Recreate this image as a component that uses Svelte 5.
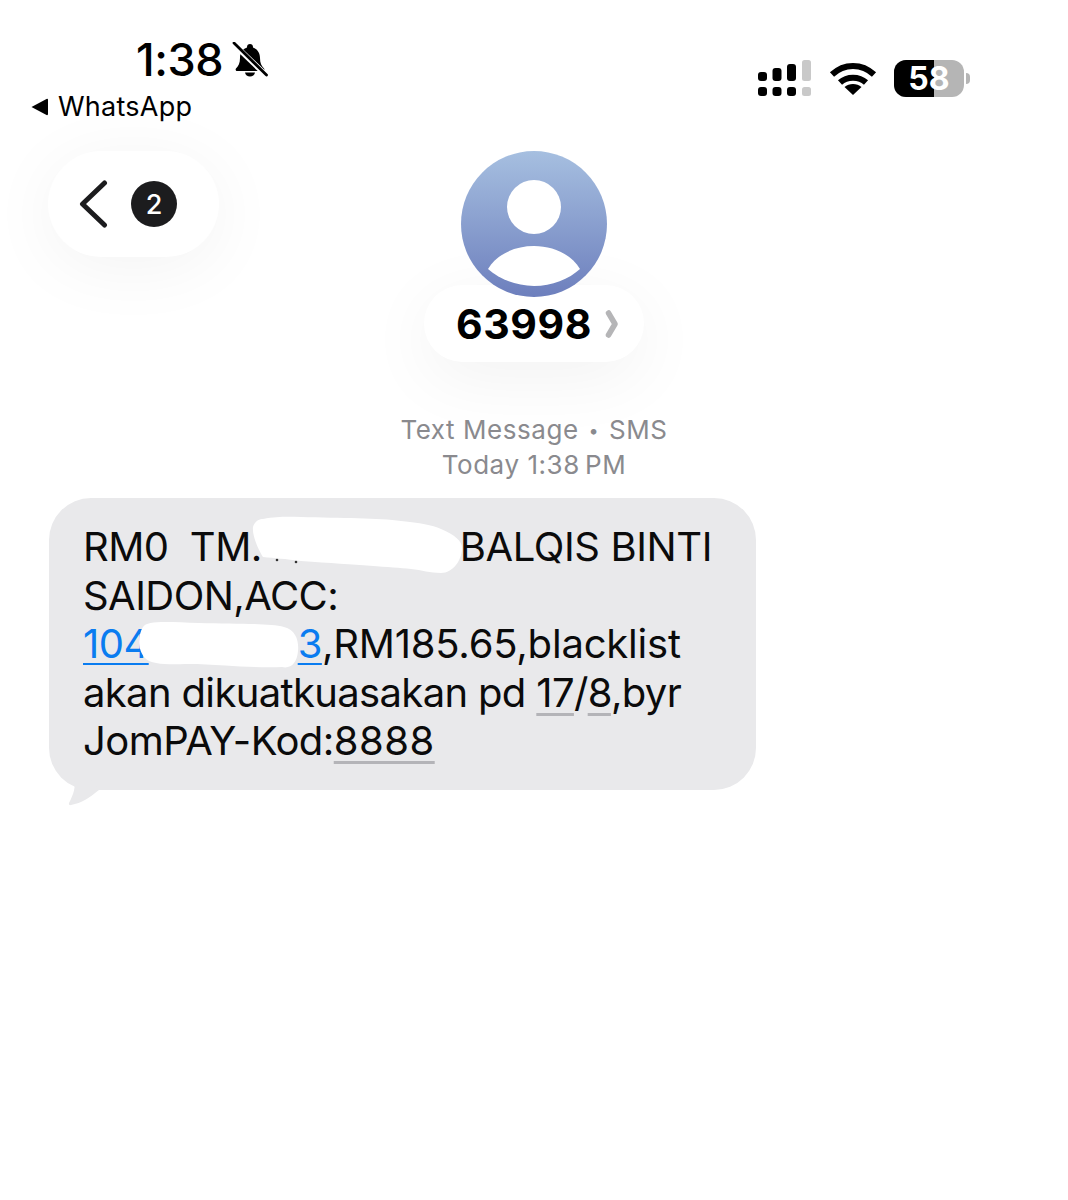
<script>
	const sans = 'Inter';
</script>

<div class="page" style="--sans: {sans}">
	<header class="status">
		<div class="status-left">
			<div class="clock">
				<span class="time">1:38</span>
				<svg class="bell" viewBox="0 0 36 36" width="36" height="36">
					<path d="M18 2c-1.800 0-3 1.200-3 3v.6C10.500 7 8 11 8 16c0 5-1.500 8-4 10.500-.8.8-.3 2.500 1 2.500h26c1.300 0 1.800-1.700 1-2.500C29.500 24 28 21 28 16c0-5-2.500-9-7-10.400V5c0-1.800-1.200-3-3-3z" fill="#000" />
					<path d="M13 30.500h10c-.4 2.500-2.500 4-5 4s-4.600-1.500-5-4z" fill="#000" />
					<path d="M1 1.500L35 34" stroke="#fff" stroke-width="5.500" />
					<path d="M2 1L34.500 33" stroke="#000" stroke-width="2.800" stroke-linecap="round" />
				</svg>
			</div>
			<div class="back-app">
				<svg viewBox="0 0 18 18" width="18" height="18"><path d="M0.500 9L15.500 1q1.500-.6 1.500 1v14q0 1.600-1.500 1z" fill="#000" /></svg>
				<span>WhatsApp</span>
			</div>
		</div>
		<div class="status-right">
			<svg viewBox="0 0 53 36" width="53" height="36">
				<rect x="0" y="12" width="9" height="9" rx="3" fill="#000" />
				<rect x="14.500" y="8" width="9" height="13" rx="3" fill="#000" />
				<rect x="29" y="4" width="9" height="17" rx="3" fill="#000" />
				<rect x="44" y="0" width="9" height="21" rx="2.500" fill="#c9c9c9" />
				<rect x="0" y="27" width="9" height="9" rx="3" fill="#000" />
				<rect x="14.500" y="27" width="9" height="9" rx="3" fill="#000" />
				<rect x="29" y="27" width="9" height="9" rx="3" fill="#000" />
				<rect x="44" y="27" width="9" height="9" rx="2.500" fill="#c9c9c9" />
			</svg>
			<svg class="wifi" viewBox="0 0 48 34" width="48" height="34">
				<path d="M3 13.500C15 2 33 2 45 13.500" fill="none" stroke="#000" stroke-width="6" stroke-linecap="butt" />
				<path d="M11 21.500C18 15 30 15 37 21.500" fill="none" stroke="#000" stroke-width="6" />
				<path d="M24 34L15.500 26C20 22 28 22 32.500 26z" fill="#000" />
			</svg>
			<div class="battery">
				<div class="battery-body">
					<div class="battery-fill"></div>
					<span class="battery-num">58</span>
				</div>
				<div class="battery-cap"></div>
			</div>
		</div>
	</header>

	<section class="nav">
		<button class="back" aria-label="Back, 2 unread">
			<svg viewBox="0 0 30 48" width="30" height="48">
				<path d="M25.500 3L3.500 24l22 21" fill="none" stroke="#1c1c1e" stroke-width="5" stroke-linecap="round" stroke-linejoin="round" />
			</svg>
			<span class="badge">2</span>
		</button>
		<div class="contact">
			<svg class="avatar" viewBox="0 0 146 146" width="146" height="146">
				<defs>
					<linearGradient id="avatar-bg" x1="0" y1="0" x2="0" y2="1">
						<stop offset="0" stop-color="#a6bfe0" />
						<stop offset="1" stop-color="#6d7fbd" />
					</linearGradient>
				</defs>
				<circle cx="73" cy="73" r="73" fill="url(#avatar-bg)" />
				<circle cx="73" cy="56" r="27" fill="#fff" />
				<path d="M27 118C36 103 54 95 73 95s37 8 46 23c-11 10-28 17-46 17s-35-7-46-17z" fill="#fff" />
			</svg>
			<div class="name-pill">
				<span class="name">63998</span>
				<svg viewBox="0 0 14 28" width="14" height="28">
					<path d="M3.500 3L10 14 3.500 25" fill="none" stroke="#b5b5b7" stroke-width="5.500" stroke-linecap="round" stroke-linejoin="round" />
				</svg>
			</div>
		</div>
		<div></div>
	</section>

	<div class="meta">
		<div>Text Message <span class="dot">•</span> SMS</div>
		<div>Today 1:38&#8239;PM</div>
	</div>

	<div class="thread">
		<div class="bubble">
			<p>
				RM0&nbsp; TM.<span class="redact r1">
					<svg viewBox="0 0 214 60" width="214" height="60">
						<path d="M3 12C5 6 9 4 13 4 30 1 40 2 51 2c39 1 79 1 100 4 19 2 31 4 40 8 14 6 21 12 21 19 0 12-9 25-21 25-11 0-19-3-30-4-21-2-51-4-110-8-16-2-26-3-38-4C8 34 2 20 3 12z" fill="#fff" />
						<circle cx="27" cy="45" r="1.300" fill="#333" />
						<circle cx="46" cy="47" r="1.300" fill="#333" />
					</svg>
				</span><span class="name-end">BALQIS BINTI</span><br />
				SAIDON,ACC:<br />
				<span class="link">104<span class="redact r2">
					<svg viewBox="0 0 160 48" width="160" height="48">
						<path d="M4 6C8 -1 30 1 60 2c35 1 70 0 85 4 12 3 15 14 14 24-1 12-7 18-16 16-30 1-60-2-85-3-24 0-45 2-52-6C-2 28 -1 14 4 6z" fill="#fff" />
					</svg>
				</span>3</span><span class="amount">,RM185.65,blacklist</span><br />
				<span class="tight">akan dikuatkuasakan pd <span class="data">17</span>/<span class="data">8</span>,byr</span><br />
				JomPAY-Kod:<span class="data digits">8888</span>
			</p>
			<svg class="tail" viewBox="0 0 40 30" width="40" height="30">
				<path d="M8 0C12 8 8 17 4 25c-.5 1.500.5 2.500 2 2C17 25 24 20 34 12L24 0z" fill="#e9e9eb" />
			</svg>
		</div>
	</div>
</div>

<style>
	:global(body) {
		background: #fff;
	}

	.page {
		width: 1068px;
		min-height: 1200px;
		background: #fff;
		color: #000;
		font-family: var(--sans), "Liberation Sans", sans-serif;
		overflow: hidden;
	}

	.status {
		display: flex;
		justify-content: space-between;
		padding: 35px 98px 0 31px;
		height: 115px;
		box-sizing: border-box;
	}

	.status-left {
		display: flex;
		flex-direction: column;
		align-items: flex-start;
	}

	.clock {
		display: flex;
		align-items: center;
		gap: 9px;
		margin-left: 105px;
		height: 50px;
	}

	.time {
		font-size: 45px;
		font-weight: 550;
		letter-spacing: -0.4px;
		line-height: 50px;
	}

	.back-app {
		display: flex;
		align-items: center;
		gap: 9px;
		height: 40px;
		margin-top: 5px;
		font-size: 27px;
		letter-spacing: 0.25px;
	}

	.status-right {
		display: flex;
		align-items: center;
		gap: 18px;
		height: 86px;
	}

	.wifi {
		margin-right: -1px;
	}

	.battery {
		display: flex;
		align-items: center;
		gap: 2px;
	}

	.battery-body {
		position: relative;
		width: 70px;
		height: 37px;
		border-radius: 12px;
		background: #b5b5b5;
		overflow: hidden;
	}

	.battery-fill {
		width: 57%;
		height: 100%;
		background: #000;
	}

	.battery-num {
		position: absolute;
		inset: 0;
		display: flex;
		align-items: center;
		justify-content: center;
		font-size: 32px;
		font-weight: 700;
		color: #fff;
	}

	.battery-cap {
		width: 4px;
		height: 11px;
		border-radius: 0 6px 6px 0;
		background: #b5b5b5;
	}

	.nav {
		display: grid;
		grid-template-columns: 1fr auto 1fr;
		align-items: start;
		margin-top: 36px;
	}

	.back {
		justify-self: start;
		display: flex;
		align-items: center;
		gap: 22px;
		width: 171px;
		height: 106px;
		margin-left: 48px;
		padding: 0 0 0 31px;
		box-sizing: border-box;
		border: 0;
		border-radius: 53px;
		background: #fff;
		box-shadow: 0 10px 70px rgba(0, 0, 0, 0.05);
	}

	.badge {
		display: flex;
		align-items: center;
		justify-content: center;
		width: 46px;
		height: 46px;
		border-radius: 50%;
		background: #1c1c1e;
		color: #fff;
		font-family: var(--sans), sans-serif;
		font-size: 27px;
		font-weight: 500;
	}

	.contact {
		display: flex;
		flex-direction: column;
		align-items: center;
	}

	.avatar {
		display: block;
		position: relative;
		z-index: 1;
	}

	.name-pill {
		display: flex;
		align-items: center;
		justify-content: center;
		gap: 13px;
		width: 220px;
		height: 77px;
		padding-left: 7px;
		box-sizing: border-box;
		margin-top: -12px;
		border-radius: 39px;
		background: #fff;
		box-shadow: 0 16px 70px rgba(0, 0, 0, 0.055);
	}

	.name {
		font-size: 41px;
		font-weight: 700;
		letter-spacing: 0.6px;
	}

	.meta {
		margin-top: 51px;
		text-align: center;
		font-size: 26px;
		line-height: 34px;
		letter-spacing: 0.55px;
		color: #8a8a8e;
	}

	.dot {
		font-size: 18px;
		vertical-align: 2px;
		margin: 0 2px;
	}

	.thread {
		margin-top: 16px;
		padding-left: 49px;
	}

	.bubble {
		position: relative;
		width: 707px;
		height: 292px;
		padding: 25px 0 0 34px;
		box-sizing: border-box;
		border-radius: 42px;
		background: #e9e9eb;
	}

	.bubble p {
		position: relative;
		z-index: 1;
		margin: 0;
		font-size: 40px;
		line-height: 48.500px;
		letter-spacing: -0.55px;
		white-space: nowrap;
		color: #0b0b0b;
	}

	.name-end {
		letter-spacing: -0.4px;
	}

	.amount {
		letter-spacing: -0.2px;
	}

	.tight {
		letter-spacing: -0.65px;
	}

	.digits {
		letter-spacing: 0.5px;
	}

	.redact {
		position: relative;
		display: inline-block;
		height: 0;
	}

	.redact svg {
		position: absolute;
		display: block;
	}

	.r1 {
		width: 198px;
	}

	.r1 svg {
		left: -12px;
		top: -46px;
	}

	.r2 {
		width: 149px;
	}

	.r2 svg {
		left: -10px;
		top: -37px;
	}

	.link {
		color: #0a7cf0;
		text-decoration: underline;
		text-decoration-thickness: 2px;
		text-underline-offset: 5px;
	}

	.data {
		text-decoration: underline;
		text-decoration-color: #b4b4b8;
		text-decoration-thickness: 3px;
		text-underline-offset: 6px;
	}

	.tail {
		position: absolute;
		left: 16px;
		bottom: -18px;
	}
</style>
